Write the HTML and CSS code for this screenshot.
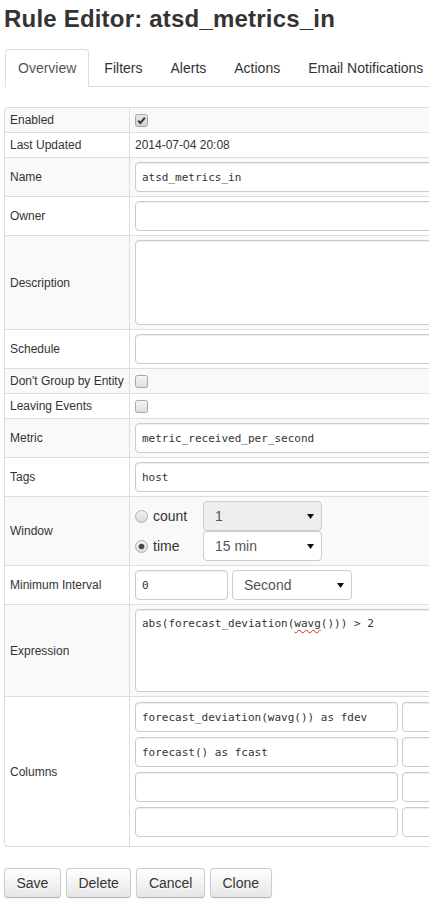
FILE: index.html
```html
<!DOCTYPE html>
<html lang="en">
<head>
<meta charset="utf-8">
<title>Rule Editor</title>
<link rel="stylesheet" href="styles.css">
</head>
<body>
<div class="page">
  <h1 class="title">Rule Editor: atsd_metrics_in</h1>
  <ul class="tabs">
    <li class="tab active"><a>Overview</a></li>
    <li class="tab"><a>Filters</a></li>
    <li class="tab"><a>Alerts</a></li>
    <li class="tab"><a>Actions</a></li>
    <li class="tab"><a>Email Notifications</a></li>
  </ul>
  <table class="grid">
    <colgroup><col class="col-label"><col class="col-value"></colgroup>
    <tbody>
      <tr>
        <td class="label">Enabled</td>
        <td><span class="check"><svg width="13" height="13" viewBox="0 0 13 13"><defs><linearGradient id="cg" x1="0" y1="0" x2="0" y2="1"><stop offset="0" stop-color="#e8e8e8"/><stop offset="1" stop-color="#cfcfcf"/></linearGradient></defs><rect x="0.5" y="0.5" width="12" height="12" rx="2" fill="url(#cg)" stroke="#a6a6a6"/><path d="M3.2 6.6 L5.4 8.9 L9.9 3.6" fill="none" stroke="#3a3a3a" stroke-width="2"/></svg></span></td>
      </tr>
      <tr>
        <td class="label">Last Updated</td>
        <td>2014-07-04 20:08</td>
      </tr>
      <tr>
        <td class="label">Name</td>
        <td><input class="field wide" type="text" value="atsd_metrics_in"></td>
      </tr>
      <tr>
        <td class="label">Owner</td>
        <td><input class="field wide" type="text" value=""></td>
      </tr>
      <tr>
        <td class="label">Description</td>
        <td><div class="area desc"></div></td>
      </tr>
      <tr>
        <td class="label">Schedule</td>
        <td><input class="field wide" type="text" value=""></td>
      </tr>
      <tr>
        <td class="label">Don't Group by Entity</td>
        <td><span class="check"><svg width="13" height="13" viewBox="0 0 13 13"><defs><linearGradient id="cg2" x1="0" y1="0" x2="0" y2="1"><stop offset="0" stop-color="#f6f6f6"/><stop offset="1" stop-color="#dedede"/></linearGradient></defs><rect x="0.5" y="0.5" width="12" height="12" rx="2" fill="url(#cg2)" stroke="#a6a6a6"/></svg></span></td>
      </tr>
      <tr>
        <td class="label">Leaving Events</td>
        <td><span class="check"><svg width="13" height="13" viewBox="0 0 13 13"><defs><linearGradient id="cg3" x1="0" y1="0" x2="0" y2="1"><stop offset="0" stop-color="#f6f6f6"/><stop offset="1" stop-color="#dedede"/></linearGradient></defs><rect x="0.5" y="0.5" width="12" height="12" rx="2" fill="url(#cg3)" stroke="#a6a6a6"/></svg></span></td>
      </tr>
      <tr>
        <td class="label">Metric</td>
        <td><input class="field wide" type="text" value="metric_received_per_second"></td>
      </tr>
      <tr>
        <td class="label">Tags</td>
        <td><input class="field wide" type="text" value="host"></td>
      </tr>
      <tr>
        <td class="label">Window</td>
        <td>
          <div class="window">
            <label class="radio"><svg width="13" height="13" viewBox="0 0 13 13"><defs><linearGradient id="rg1" x1="0" y1="0" x2="0" y2="1"><stop offset="0" stop-color="#f4f4f4"/><stop offset="1" stop-color="#d8d8d8"/></linearGradient></defs><circle cx="6.5" cy="6.5" r="6" fill="url(#rg1)" stroke="#b0b0b0"/></svg><span>count</span></label>
            <div class="select disabled"><span>1</span><svg width="7" height="5" viewBox="0 0 7 5"><polygon points="0,0 7,0 3.5,5" fill="#111"/></svg></div>
            <label class="radio"><svg width="13" height="13" viewBox="0 0 13 13"><defs><linearGradient id="rg2" x1="0" y1="0" x2="0" y2="1"><stop offset="0" stop-color="#f4f4f4"/><stop offset="1" stop-color="#d8d8d8"/></linearGradient></defs><circle cx="6.5" cy="6.5" r="6" fill="url(#rg2)" stroke="#b0b0b0"/><circle cx="6.5" cy="6.5" r="2.8" fill="#4a4a4a"/></svg><span>time</span></label>
            <div class="select"><span>15 min</span><svg width="7" height="5" viewBox="0 0 7 5"><polygon points="0,0 7,0 3.5,5" fill="#111"/></svg></div>
          </div>
        </td>
      </tr>
      <tr>
        <td class="label">Minimum Interval</td>
        <td>
          <div class="interval">
            <input class="field num" type="text" value="0">
            <div class="select unit"><span>Second</span><svg width="7" height="5" viewBox="0 0 7 5"><polygon points="0,0 7,0 3.5,5" fill="#111"/></svg></div>
          </div>
        </td>
      </tr>
      <tr>
        <td class="label">Expression</td>
        <td><div class="area expr">abs(forecast_deviation(<span class="spell">wavg</span>())) &gt; 2</div></td>
      </tr>
      <tr>
        <td class="label">Columns</td>
        <td>
          <div class="columns">
            <input class="field colname" type="text" value="forecast_deviation(wavg()) as fdev">
            <input class="field colalias" type="text" value="">
            <input class="field colname" type="text" value="forecast() as fcast">
            <input class="field colalias" type="text" value="">
            <input class="field colname" type="text" value="">
            <input class="field colalias" type="text" value="">
            <input class="field colname" type="text" value="">
            <input class="field colalias" type="text" value="">
          </div>
        </td>
      </tr>
    </tbody>
  </table>
  <div class="actions">
    <button class="btn" type="button">Save</button>
    <button class="btn" type="button">Delete</button>
    <button class="btn" type="button">Cancel</button>
    <button class="btn" type="button">Clone</button>
  </div>
</div>
</body>
</html>
```

FILE: styles.css
```css
html, body {
  margin: 0;
  padding: 0;
  background: #fff;
  overflow: hidden;
}

body {
  font-family: "Liberation Sans", Arial, sans-serif;
  color: #333;
}

.page {
  padding: 4px;
  width: 421px;
  overflow: hidden;
}

.title {
  margin: 0;
  font-size: 24px;
  line-height: 30px;
  font-weight: bold;
  letter-spacing: 0.2px;
  color: #333;
  white-space: nowrap;
}

.tabs {
  list-style: none;
  margin: 15px 0 20px 0;
  padding: 0 0 0 1px;
  display: flex;
  border-bottom: 1px solid #ddd;
  white-space: nowrap;
  width: 700px;
}

.tab {
  margin-bottom: -1px;
}

.tab a {
  display: block;
  padding: 8px 12px;
  margin-right: 2px;
  line-height: 20px;
  font-size: 14px;
  color: #333;
  border: 1px solid transparent;
  border-radius: 4px 4px 0 0;
}

.tab.active a {
  color: #555;
  background: #fff;
  border-color: #ddd;
  border-bottom-color: transparent;
}

.grid {
  border-collapse: separate;
  border-spacing: 0;
  border: 1px solid #ddd;
  border-left: 0;
  border-radius: 4px;
  table-layout: fixed;
  width: 640px;
  font-size: 12px;
  color: #333;
}

.col-label {
  width: 125px;
}

.grid td {
  padding: 4px 5px;
  line-height: 16px;
  border-top: 1px solid #ddd;
  border-left: 1px solid #ddd;
  vertical-align: middle;
  text-align: left;
}

.grid tr:first-child td {
  border-top: 0;
}

.grid tr:first-child td:first-child {
  border-top-left-radius: 4px;
}

.grid tr:last-child td:first-child {
  border-bottom-left-radius: 4px;
}

.grid tr:nth-child(odd) td {
  background: #f9f9f9;
}

.label {
  white-space: nowrap;
}

.check {
  display: block;
  width: 13px;
  height: 13px;
}

.check svg {
  display: block;
}

.field,
.area {
  display: block;
  box-sizing: border-box;
  height: 30px;
  padding: 4px 6px;
  border: 1px solid #ccc;
  border-radius: 4px;
  background: #fff;
  font-family: "DejaVu Sans Mono", "Liberation Mono", monospace;
  font-size: 11px;
  line-height: 20px;
  color: #333;
  box-shadow: inset 0 1px 1px rgba(0, 0, 0, 0.075);
  margin: 0;
  outline: none;
}

.wide {
  width: 480px;
}

.area {
  width: 480px;
  white-space: pre;
}

.desc {
  height: 85px;
}

.expr {
  height: 83px;
}

.spell {
  text-decoration: underline wavy #e02020;
  text-decoration-thickness: 1px;
  text-underline-offset: 2px;
}

.window {
  display: grid;
  grid-template-columns: 68px 119px;
  grid-auto-rows: 30px;
}

.radio {
  display: flex;
  align-items: center;
  font-size: 14px;
  color: #333;
}

.radio svg {
  display: block;
  margin-right: 5px;
}

.select {
  box-sizing: border-box;
  height: 30px;
  display: flex;
  align-items: center;
  justify-content: space-between;
  padding: 0 7px 0 11px;
  border: 1px solid #ccc;
  border-radius: 4px;
  background: #fff;
  font-size: 14px;
  color: #555;
}

.select svg {
  display: block;
}

.select.disabled {
  background: #eee;
}

.interval {
  display: flex;
  gap: 4px;
}

.num {
  width: 93px;
}

.unit {
  width: 120px;
}

.columns {
  display: grid;
  grid-template-columns: 263px 150px;
  column-gap: 4px;
  padding-top: 1px;
}

.columns .field {
  margin-bottom: 5px;
  width: 100%;
}

.actions {
  display: flex;
  gap: 5px;
  margin-top: 21px;
}

.btn {
  box-sizing: border-box;
  height: 30px;
  padding: 4px 11.5px;
  line-height: 20px;
  font-family: "Liberation Sans", Arial, sans-serif;
  font-size: 14px;
  color: #333;
  text-shadow: 0 1px 1px rgba(255, 255, 255, 0.75);
  background: linear-gradient(to bottom, #ffffff, #e6e6e6);
  border: 1px solid #ccc;
  border-bottom-color: #b3b3b3;
  border-radius: 4px;
  box-shadow: inset 0 1px 0 rgba(255, 255, 255, 0.2), 0 1px 2px rgba(0, 0, 0, 0.05);
  cursor: pointer;
}
```
